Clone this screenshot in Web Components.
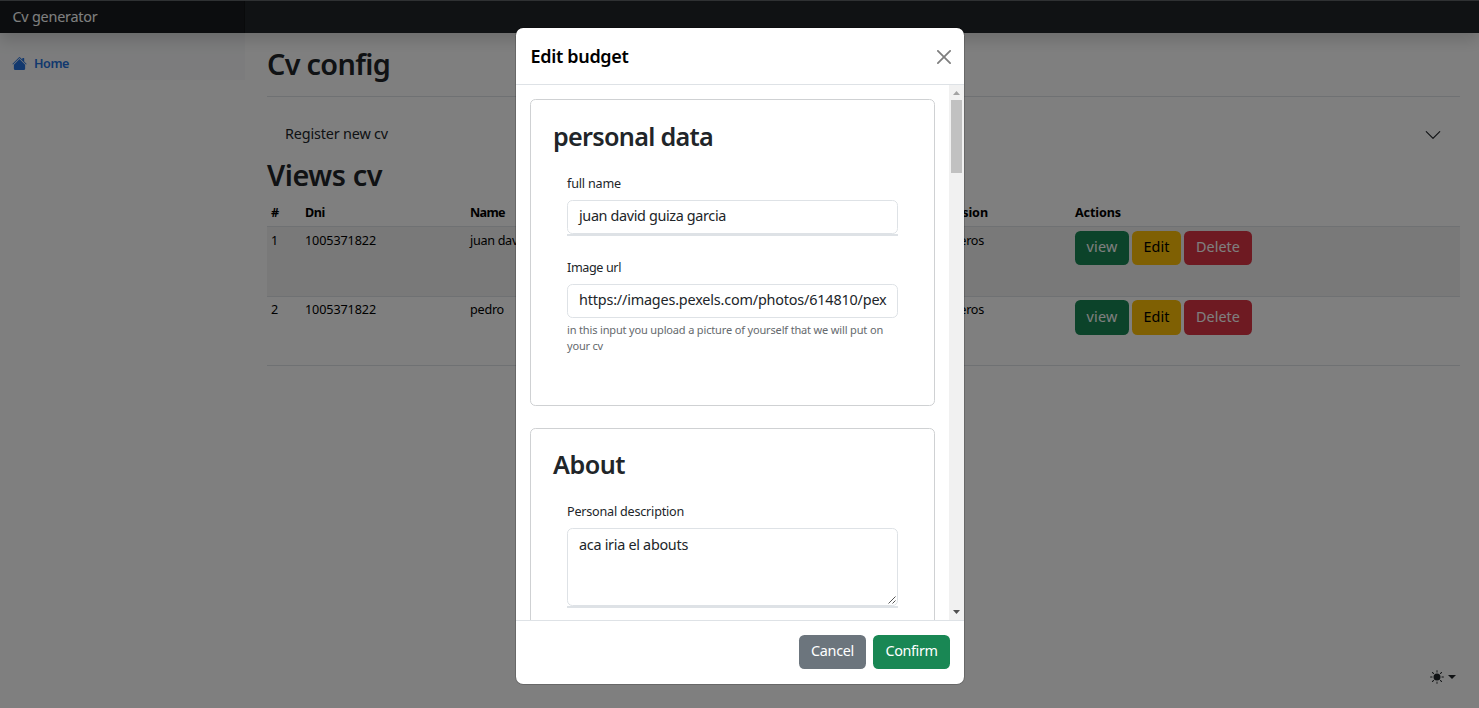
<!DOCTYPE html>
<html lang="en">
<head>
<meta charset="utf-8">
<title>Cv generator</title>
<style>
html,body{margin:0;height:100%;overflow:hidden}
body{font-family:"Noto Sans","Open Sans",sans-serif;font-size:14.4px;color:#212529;background:#fff}
</style>
</head>
<body>
<cv-app></cv-app>
<script>
const define=(name,html,ready)=>customElements.define(name,class extends HTMLElement{
  connectedCallback(){
    if(this.shadowRoot)return;
    const t=document.createElement('template');
    t.innerHTML=typeof html==='function'?html(this):html;
    this.attachShadow({mode:'open'}).appendChild(t.content.cloneNode(true));
    if(ready)ready(this);
  }
});

/* A single line of text whose tracking is adjusted to a given width. */
define('fit-text','<style>:host{display:inline-block;white-space:nowrap}span{display:inline-block}</style><span><slot></slot></span>',el=>{
  const s=el.shadowRoot.querySelector('span'),w=+el.getAttribute('w');
  const fit=()=>{
    s.style.letterSpacing='0';
    const n=[...el.textContent].length,d=(w-s.getBoundingClientRect().width)/n;
    s.style.letterSpacing=d.toFixed(3)+'px';
  };
  if(w)fit();
});

define('ui-button',`<style>
:host{display:flex;box-sizing:border-box;height:34px;align-items:center;justify-content:center;border-radius:5.4px;color:#fff;font-size:14.4px;line-height:20px;padding-bottom:2px}
:host([kind=success]){background:#198754}
:host([kind=warning]){background:#ffc107;color:#000}
:host([kind=danger]){background:#dc3545}
:host([kind=secondary]){background:#6c757d}
</style><slot></slot>`);

define('top-bar',`<style>
:host{display:flex;position:relative;z-index:2;height:33px;box-sizing:border-box;background:#212529;box-shadow:0 7.2px 14.4px rgba(0,0,0,.15);border-top:1px solid #5e6266}
.brand{width:245px;box-sizing:border-box;padding:6px 0 0 12.5px;line-height:20px;background:rgba(0,0,0,.25);box-shadow:inset -1px 0 0 rgba(0,0,0,.25);color:#fff}
</style><div class="brand"><fit-text w="85">Cv generator</fit-text></div>`);

define('side-nav',`<style>
:host{display:block;width:245px;flex:none}
nav{height:47px;box-sizing:border-box;background:#f8f9fa;display:flex;padding:21px 0 0 12px;gap:7px;color:#2470dc}
svg{width:15px;height:15px;margin-top:2px}
fit-text{font-size:12.6px;font-weight:600;line-height:20px}
</style><nav><svg viewBox="0 0 16 16" fill="currentColor"><path d="M8.707 1.5a1 1 0 0 0-1.414 0L.646 8.146a.5.5 0 0 0 .708.708L8 2.207l6.646 6.647a.5.5 0 0 0 .708-.708L13 5.793V2.5a.5.5 0 0 0-.5-.5h-1a.5.5 0 0 0-.5.5v1.293L8.707 1.5Z"/><path d="m8 3.293 6 6V13.5a1.5 1.5 0 0 1-1.5 1.5h-9A1.5 1.5 0 0 1 2 13.5V9.293l6-6Z"/></svg><fit-text w="35">Home</fit-text></nav>`);

define('cv-row',el=>`<style>
:host{display:grid;grid-template-columns:34px 165px 453px 152px 1fr;box-sizing:border-box;padding-left:4px;border-bottom:1px solid #dee2e6;font-size:12.6px;color:#000;line-height:20px;height:69px;padding-top:3px}
:host([striped]){background:#f2f2f2;height:70px;padding-top:4px}
:host([head]){height:27px;font-weight:700;padding-top:3px}
.actions{display:flex;gap:3px}
.actions>ui-button{width:54px}.actions>ui-button:nth-child(2){width:49px}.actions>ui-button:nth-child(3){width:68px}
:host(:not([striped])) ui-button{height:35px}
</style>
<fit-text>${el.getAttribute('n')}</fit-text>
<fit-text w="${el.hasAttribute('head')?20:71}">${el.getAttribute('dni')}</fit-text>
<fit-text w="${el.getAttribute('nw')}">${el.getAttribute('name')}</fit-text>
<fit-text w="${el.hasAttribute('head')?65:61}">${el.getAttribute('job')}</fit-text>
${el.hasAttribute('head')?'<fit-text w="46">Actions</fit-text>':`<div class="actions"><ui-button kind="success"><fit-text w="31">view</fit-text></ui-button><ui-button kind="warning"><fit-text w="26">Edit</fit-text></ui-button><ui-button kind="danger"><fit-text w="44">Delete</fit-text></ui-button></div>`}`);

define('cv-main',`<style>
:host{display:block;flex:1;padding:0 19px 0 22px}
h1{margin:0;font-size:28.8px;font-weight:600;line-height:34px}
.title{height:64px;box-sizing:border-box;padding-top:14px;border-bottom:1px solid #dee2e6}
.acc{display:flex;justify-content:space-between;align-items:center;height:46px;margin-top:14px;padding:0 18px;line-height:20px}
.acc svg{width:18px;height:18px;margin-top:2px}
.views{height:43px;padding-top:1px;box-sizing:border-box}
</style>
<div class="title"><h1><fit-text w="123">Cv config</fit-text></h1></div>
<div class="acc"><fit-text w="103">Register new cv</fit-text><svg viewBox="0 0 16 16" fill="#212529"><path fill-rule="evenodd" d="M1.646 4.646a.5.5 0 0 1 .708 0L8 10.293l5.646-5.647a.5.5 0 0 1 .708.708l-6 6a.5.5 0 0 1-.708 0l-6-6a.5.5 0 0 1 0-.708z"/></svg></div>
<div class="views"><h1><fit-text w="115">Views cv</fit-text></h1></div>
<cv-row head n="#" dni="Dni" name="Name" nw="35" job="Profession"></cv-row>
<cv-row striped n="1" dni="1005371822" name="juan david guiza garcia" nw="129" job="Ingenieros"></cv-row>
<cv-row n="2" dni="1005371822" name="pedro" nw="34" job="Ingenieros"></cv-row>`);

define('theme-toggle',`<style>
:host{position:absolute;left:1430px;top:670px;display:flex;align-items:center;gap:4px}
svg{width:14px;height:14px}
i{border:4px solid transparent;border-top-color:#212529;border-bottom:0}
</style><svg viewBox="0 0 16 16" fill="#212529"><path d="M8 12a4 4 0 1 0 0-8 4 4 0 0 0 0 8zM8 0a.5.5 0 0 1 .5.5v2a.5.5 0 0 1-1 0v-2A.5.5 0 0 1 8 0zm0 13a.5.5 0 0 1 .5.5v2a.5.5 0 0 1-1 0v-2A.5.5 0 0 1 8 13zm8-5a.5.5 0 0 1-.5.5h-2a.5.5 0 0 1 0-1h2a.5.5 0 0 1 .5.5zM3 8a.5.5 0 0 1-.5.5h-2a.5.5 0 0 1 0-1h2A.5.5 0 0 1 3 8zm10.657-5.657a.5.5 0 0 1 0 .707l-1.414 1.415a.5.5 0 1 1-.707-.708l1.414-1.414a.5.5 0 0 1 .707 0zm-9.193 9.193a.5.5 0 0 1 0 .707L3.05 13.657a.5.5 0 0 1-.707-.707l1.414-1.414a.5.5 0 0 1 .707 0zm9.193 2.121a.5.5 0 0 1-.707 0l-1.414-1.414a.5.5 0 0 1 .707-.707l1.414 1.414a.5.5 0 0 1 0 .707zM4.464 4.465a.5.5 0 0 1-.707 0L2.343 3.05a.5.5 0 1 1 .707-.707l1.414 1.414a.5.5 0 0 1 0 .708z"/></svg><i></i>`);

define('form-card',`<style>
:host{display:block;box-sizing:border-box;border:1px solid #cfd1d3;border-radius:5.4px;padding:20px 36px 0;color:#212529}
h2{margin:0 0 22px -14px;font-size:25.2px;font-weight:600;line-height:32px}
</style><h2><slot name="title"></slot></h2><slot></slot>`);

define('form-field',`<style>
:host{display:block}
label{display:block;font-size:12.6px;line-height:20px;height:26px}
.box{position:relative;height:34px;box-sizing:border-box;border:1px solid #dee2e6;border-radius:5.4px;padding:5px 11px;line-height:20px;overflow:hidden}
:host([area]) .box{height:78px;padding-top:6px}
:host([line])::after{content:"";display:block;height:2px;background:#dee2e6}
svg{display:none;position:absolute;right:1px;bottom:1px;width:8px;height:8px}
:host([area]) svg{display:block}
.help{font-size:11.03px;line-height:16px;color:#65696d;padding-top:4px}
</style><label><slot name="label"></slot></label><div class="box"><slot></slot><svg viewBox="0 0 8 8" stroke="#444" stroke-width=".9"><path d="M.5 7.5 7.5 .5M4.5 7.5l3-3"/></svg></div><div class="help"><slot name="help"></slot></div>`,el=>{
  if(!el.querySelector('[slot=help]'))el.shadowRoot.querySelector('.help').remove();
});

define('scroll-bar',`<style>
:host{display:flex;flex-direction:column;width:15px;flex:none;background:#f1f1f1;align-items:center}
svg{width:15px;height:15px}
.thumb{width:11px;height:73px;background:#c1c1c1}
.gap{flex:1}
</style><svg viewBox="0 0 15 15"><path d="M4 10h7L7.5 6z" fill="#a3a3a3"/></svg><div class="thumb"></div><div class="gap"></div><svg viewBox="0 0 15 15"><path d="M4 5h7L7.5 9z" fill="#505050"/></svg>`);

define('edit-modal',`<style>
:host{position:absolute;left:516px;top:28px;width:448px;height:656px;box-sizing:border-box;background:#fff;border-radius:7.2px;box-shadow:0 0 0 1px rgba(0,0,0,.18);display:flex;flex-direction:column;overflow:hidden}
header{display:flex;height:57px;box-sizing:border-box;border-bottom:1px solid #dee2e6;align-items:center;justify-content:space-between;padding:0 13.5px 0 14.5px;color:#000;font-size:18px;font-weight:600;line-height:26px}
header svg{width:14px;height:14px;opacity:.5;margin-top:1px}
main{flex:1;min-height:0;display:flex;overflow:hidden}
.content{flex:1;padding:14px 14px 0;overflow:hidden}
.one{height:307px;margin-bottom:22px}.two{height:330px;padding-top:19px}
.first{margin-bottom:22px}
footer{height:64px;box-sizing:border-box;border-top:1px solid #dee2e6;display:flex;gap:7px;justify-content:flex-end;padding:14px 14px 0}
.c{width:67px}.ok{width:77px}
</style>
<header><fit-text w="98">Edit budget</fit-text><svg viewBox="0 0 16 16"><path d="M.293.293a1 1 0 0 1 1.414 0L8 6.586 14.293.293a1 1 0 1 1 1.414 1.414L9.414 8l6.293 6.293a1 1 0 0 1-1.414 1.414L8 9.414l-6.293 6.293a1 1 0 0 1-1.414-1.414L6.586 8 .293 1.707a1 1 0 0 1 0-1.414z"/></svg></header>
<main><div class="content">
<form-card class="one"><fit-text slot="title" w="160">personal data</fit-text>
<form-field class="first" line><fit-text slot="label" w="54">full name</fit-text><fit-text w="147">juan david guiza garcia</fit-text></form-field>
<form-field><fit-text slot="label" w="54">Image url</fit-text><fit-text w="307.5">https://images.pexels.com/photos/614810/pex</fit-text><fit-text slot="help" w="316">in this input you upload a picture of yourself that we will put on</fit-text><fit-text slot="help" w="36">your cv</fit-text></form-field>
</form-card>
<form-card class="two"><fit-text slot="title" w="72">About</fit-text>
<form-field area line><fit-text slot="label" w="117">Personal description</fit-text><fit-text w="109">aca iria el abouts</fit-text></form-field>
</form-card>
</div><scroll-bar></scroll-bar></main>
<footer><ui-button class="c" kind="secondary"><fit-text w="43">Cancel</fit-text></ui-button><ui-button class="ok" kind="success"><fit-text w="52">Confirm</fit-text></ui-button></footer>`);

define('cv-app',`<style>
:host{display:block;position:relative;width:1479px;height:708px;overflow:hidden}
.cols{display:flex}
.backdrop{position:absolute;inset:0;background:rgba(0,0,0,.5);z-index:5}
edit-modal{z-index:6}
</style><top-bar></top-bar><div class="cols"><side-nav></side-nav><cv-main></cv-main></div><theme-toggle></theme-toggle><div class="backdrop"></div><edit-modal></edit-modal>`);
</script>
</body>
</html>
